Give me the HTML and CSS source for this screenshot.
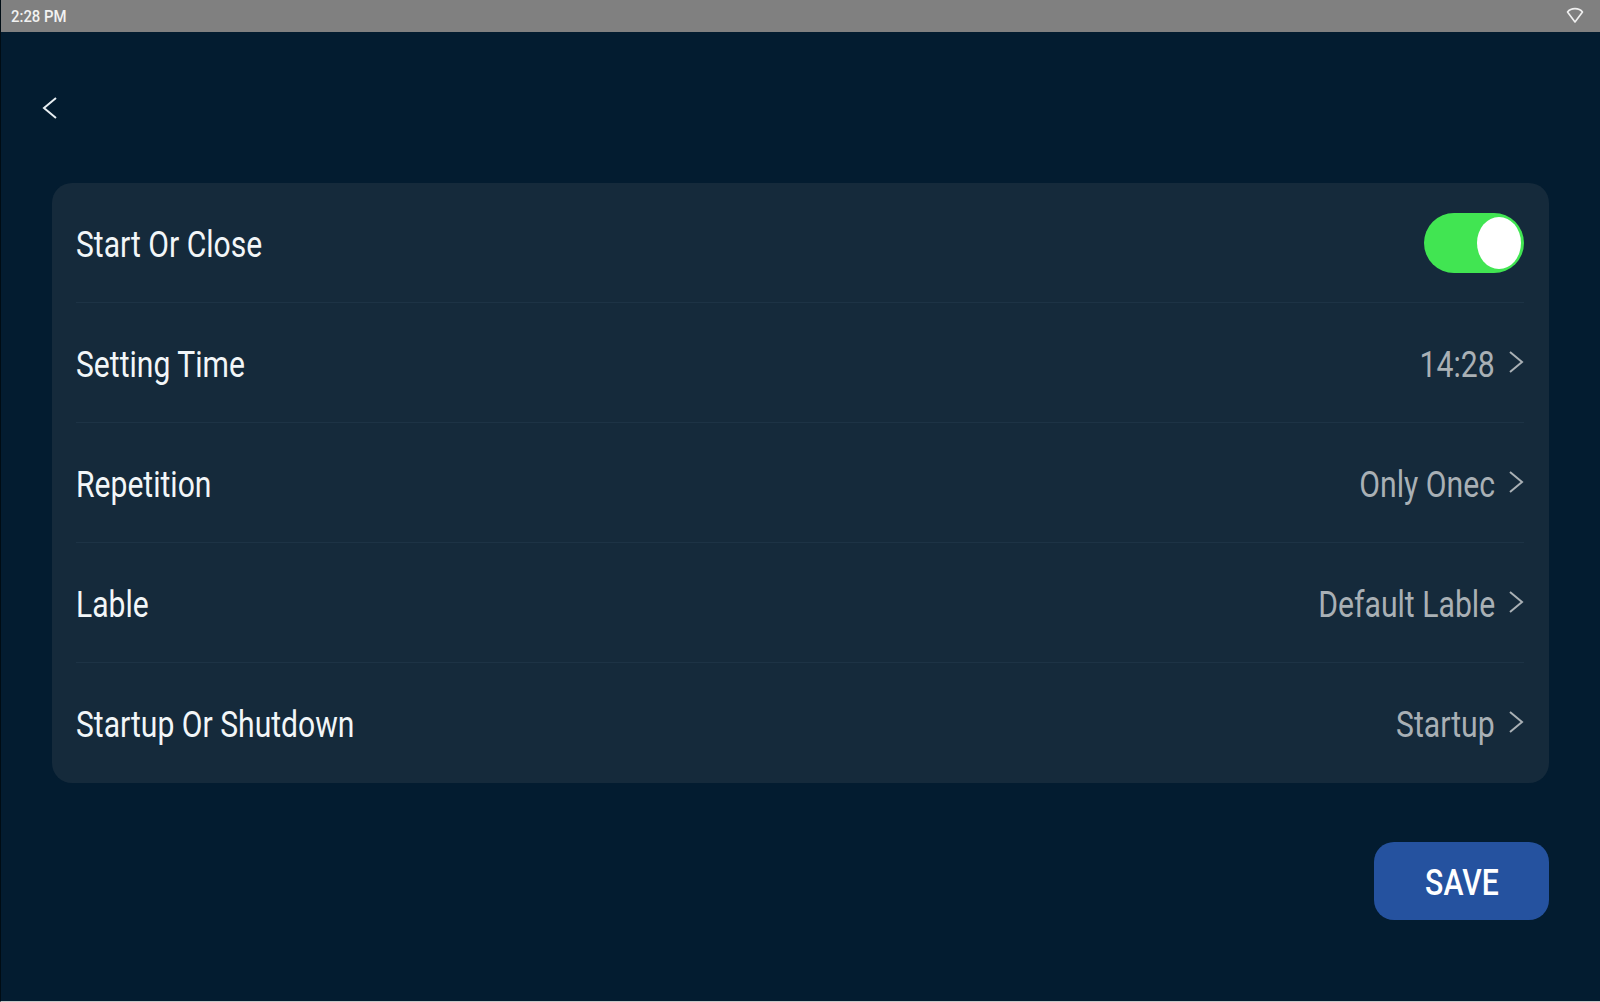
FILE: index.html
```html
<!DOCTYPE html>
<html lang="en">

<head>
    <meta charset="UTF-8">
    <title>Timer Setting</title>
    <link rel="stylesheet" href="styles.css">
</head>

<body>

    <div class="status-bar">
        <span class="status-time">2:28 PM</span>
        <svg class="wifi-icon" width="18" height="18" viewBox="0 0 18 18">
            <path d="M1.5 6 C5 1.5 13 1.5 16.5 6 L9 16 Z" fill="none" stroke="#f0f0f0" stroke-width="1.6" stroke-linejoin="round" />
        </svg>
    </div>

    <div class="content">
        <div class="back-row">
            <svg class="back-icon" width="16" height="24" viewBox="0 0 16 24">
                <path d="M14 2 L2 12 L14 22" fill="none" stroke="#e8eef2" stroke-width="2" />
            </svg>
        </div>

        <div class="card">
            <div class="row">
                <span class="title">Start Or Close</span>
                <div class="toggle">
                    <div class="knob"></div>
                </div>
            </div>
            <div class="row">
                <span class="title">Setting Time</span>
                <div class="right">
                    <span class="value">14:28</span>
                    <svg class="arrow" width="16" height="24" viewBox="0 0 16 24">
                        <path d="M2 2 L14 12 L2 22" fill="none" stroke="#a9b0b5" stroke-width="2" />
                    </svg>
                </div>
            </div>
            <div class="row">
                <span class="title">Repetition</span>
                <div class="right">
                    <span class="value">Only Onec</span>
                    <svg class="arrow" width="16" height="24" viewBox="0 0 16 24">
                        <path d="M2 2 L14 12 L2 22" fill="none" stroke="#a9b0b5" stroke-width="2" />
                    </svg>
                </div>
            </div>
            <div class="row">
                <span class="title">Lable</span>
                <div class="right">
                    <span class="value">Default Lable</span>
                    <svg class="arrow" width="16" height="24" viewBox="0 0 16 24">
                        <path d="M2 2 L14 12 L2 22" fill="none" stroke="#a9b0b5" stroke-width="2" />
                    </svg>
                </div>
            </div>
            <div class="row">
                <span class="title">Startup Or Shutdown</span>
                <div class="right">
                    <span class="value">Startup</span>
                    <svg class="arrow" width="16" height="24" viewBox="0 0 16 24">
                        <path d="M2 2 L14 12 L2 22" fill="none" stroke="#a9b0b5" stroke-width="2" />
                    </svg>
                </div>
            </div>
        </div>

        <div class="actions">
            <button class="save-btn"><span class="save-text">SAVE</span></button>
        </div>
    </div>

</body>

</html>
```

FILE: styles.css
```css
html,
body {
    margin: 0;
    height: 100%;
}

body {
    font-family: Roboto, sans-serif;
    background-color: #031c30;
    border-left: 1px solid #000c14;
    border-bottom: 1px solid #c8c8c8;
    box-sizing: border-box;
    overflow: hidden;
}

.status-bar {
    height: 32px;
    background-color: #808080;
    display: flex;
    align-items: center;
    justify-content: space-between;
    padding: 0 16px 0 10px;
}

.status-time {
    font-size: 16px;
    font-weight: 500;
    color: #f2f2f2;
    display: inline-block;
    transform: scaleX(0.93);
    transform-origin: left center;
}

.wifi-icon {
    display: block;
    margin-top: -2px;
}

.content {
    padding: 0 51px 0 51px;
}

.back-row {
    height: 151px;
    display: flex;
    align-items: center;
}

.back-icon {
    margin: 0 0 0 -10px;
}

.card {
    background-color: #152a3b;
    border-radius: 20px;
    padding: 0 25px 0 24px;
}

.row {
    height: 120px;
    box-sizing: border-box;
    display: flex;
    align-items: center;
    justify-content: space-between;
    border-bottom: 1px solid #1d3345;
}

.row:last-child {
    border-bottom: none;
}

.title {
    font-size: 36px;
    color: #f2f6f8;
    display: inline-block;
    margin-top: 4px;
    transform: scaleX(0.836);
    transform-origin: left center;
}

.right {
    display: flex;
    align-items: center;
    gap: 13px;
}

.value {
    font-size: 36px;
    color: #a9b0b5;
    display: inline-block;
    margin-top: 4px;
    transform: scaleX(0.838);
    transform-origin: right center;
}

.arrow {
    margin-top: -2px;
}

.toggle {
    width: 100px;
    height: 60px;
    border-radius: 30px;
    background-color: #41e552;
    display: flex;
    align-items: center;
    justify-content: flex-end;
    padding-right: 3px;
    box-sizing: border-box;
}

.knob {
    width: 44px;
    height: 52px;
    border-radius: 50%;
    background-color: #fff;
}

.actions {
    display: flex;
    justify-content: flex-end;
    margin-top: 59px;
}

.save-btn {
    width: 175px;
    height: 78px;
    border: none;
    border-radius: 20px;
    background-color: #25529f;
    color: #fff;
    font-family: Roboto, sans-serif;
    padding: 4px 0 0;
}

.save-text {
    font-size: 36px;
    font-weight: 500;
    display: inline-block;
    transform: scaleX(0.838);
}
```
